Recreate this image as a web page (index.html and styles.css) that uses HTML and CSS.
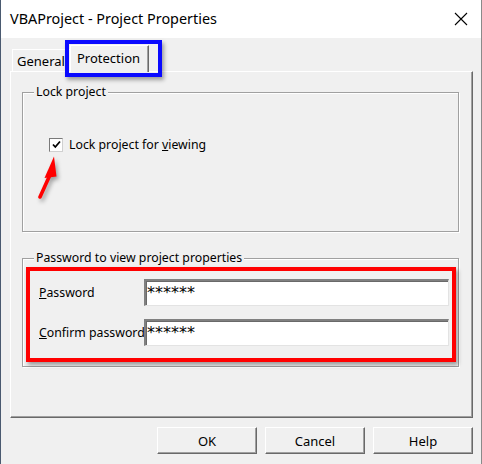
FILE: index.html
```html
<!DOCTYPE html>
<html>
<head>
<meta charset="utf-8">
<link rel="stylesheet" href="styles.css">
</head>
<body>
<div class="window">
  <div class="titlebar">
    <span class="title">VBAProject - Project Properties</span>
    <svg class="close" width="14" height="14" viewBox="0 0 14 14"><path d="M1 1 L13 13 M13 1 L1 13" stroke="#000" stroke-width="1.1" fill="none"/></svg>
  </div>
  <div class="content">
    <div class="tabs">
      <div class="tab tab-general">General</div>
      <div class="tab tab-active">Protection</div>
    </div>
    <div class="page">
      <fieldset class="group group-lock">
        <legend>Lock project</legend>
        <div class="check-row">
          <span class="checkbox"><svg width="11" height="11" viewBox="0 0 11 11"><path d="M2 5.5 L4.3 8 L9 2.5" stroke="#000" stroke-width="1.8" fill="none"/></svg></span>
          <span class="check-label">Lock project for <u>v</u>iewing</span>
        </div>
      </fieldset>
      <fieldset class="group group-pass">
        <legend>Password to view project properties</legend>
        <div class="field-row first">
          <span class="field-label"><u>P</u>assword</span>
          <span class="input">******</span>
        </div>
        <div class="field-row">
          <span class="field-label"><u>C</u>onfirm password</span>
          <span class="input">******</span>
        </div>
      </fieldset>
    </div>
    <div class="buttons">
      <div class="btn">OK</div>
      <div class="btn">Cancel</div>
      <div class="btn">Help</div>
    </div>
  </div>
  <div class="mark mark-blue"></div>
  <div class="mark mark-red"></div>
  <svg class="arrow" width="32" height="56" viewBox="0 0 32 56">
    <path d="M19.5 25 L10 46" stroke="#ff0000" stroke-width="3.6" stroke-linecap="round" fill="none"/>
    <path d="M24 5.5 L26.5 25.5 L14.5 27 Z" fill="#ff0000"/>
  </svg>
</div>
</body>
</html>
```

FILE: styles.css
```css
* { box-sizing: border-box; }
html, body { margin: 0; padding: 0; }
body {
  width: 482px;
  height: 464px;
  overflow: hidden;
  background: #f0f0f0;
  font-family: "Noto Sans", "Liberation Sans", sans-serif;
  font-size: 12.3px;
  color: #000;
}
.window {
  position: relative;
  width: 482px;
  height: 464px;
  background: #f0f0f0;
  border-left: 1px solid #4a5a70;
  border-right: 1px solid #8a8a8a;
  display: flex;
  flex-direction: column;
}
.titlebar {
  height: 38px;
  background: #fff;
  display: flex;
  align-items: center;
  justify-content: space-between;
  padding: 0 13px 0 9px;
  flex-shrink: 0;
}
.title {
  font-size: 14.4px;
  color: #000;
  position: relative;
  top: -1px;
}
.close { display: block; }
.content {
  padding: 0 8px 0 9px;
  display: flex;
  flex-direction: column;
}
.tabs {
  height: 33px;
  display: flex;
  align-items: flex-end;
  padding-left: 2px;
}
.tab {
  border-top: 1px solid #fff;
  border-left: 1px solid #fff;
  border-right: 1px solid #696969;
  box-shadow: inset -1px 0 0 #a0a0a0;
  background: #f0f0f0;
  white-space: nowrap;
  font-size: 13px;
}
.tab-general {
  height: 22px;
  width: 60px;
  padding: 2px 0 0 4px;
  overflow: hidden;
}
.tab-active {
  height: 27px;
  width: 79px;
  margin-left: -2px;
  margin-bottom: -1px;
  padding: 3px 0 0 6px;
  position: relative;
  z-index: 2;
}
.page {
  width: 463px;
  height: 347px;
  border-top: 1px solid #fff;
  border-left: 1px solid #fff;
  border-right: 1px solid #696969;
  border-bottom: 1px solid #696969;
  box-shadow: inset -1px -1px 0 #a0a0a0;
  padding: 12px 12px 0 11px;
  display: flex;
  flex-direction: column;
}
.group {
  margin: 0;
  padding: 0;
  border: 1px solid #a0a0a0;
  box-shadow: 1px 1px 0 #fff, inset 1px 1px 0 #fff;
  width: 437px;
  min-width: 0;
}
.group legend {
  margin-left: 11px;
  padding: 0 2px;
  line-height: 16px;
  background: #f0f0f0;
}
.group-lock { height: 148px; }
.group-pass { height: 117px; margin-top: 18px; }
.check-row {
  display: flex;
  align-items: center;
  margin-top: 36px;
  padding-left: 26px;
}
.checkbox {
  width: 14px;
  height: 14px;
  border: 1px solid #7a7a7a;
  border-right-color: #d0d0d0;
  border-bottom-color: #d0d0d0;
  background: #fff;
  display: flex;
  align-items: center;
  justify-content: center;
}
.checkbox svg { display: block; }
.check-label { margin-left: 6px; }
.field-row {
  display: flex;
  align-items: center;
  padding-left: 16px;
  margin-top: 13px;
}
.field-label {
  width: 105px;
  white-space: nowrap;
}
.input {
  width: 305px;
  height: 27px;
  background: #fff;
  border-top: 2px solid #808080;
  border-left: 2px solid #808080;
  border-right: 1px solid #e3e3e3;
  border-bottom: 1px solid #e3e3e3;
  box-shadow: inset 1px 1px 0 #696969;
  font-family: "DejaVu Sans", sans-serif;
  font-size: 16px;
  letter-spacing: 0;
  line-height: 18px;
  padding: 3px 0 0 1px;
}
.buttons {
  display: flex;
  justify-content: flex-end;
  gap: 8px;
  margin-top: 9px;
}
.btn {
  width: 100px;
  height: 27px;
  border-top: 1px solid #fff;
  border-left: 1px solid #fff;
  border-right: 1px solid #696969;
  border-bottom: 1px solid #696969;
  box-shadow: inset -1px -1px 0 #a0a0a0;
  background: #f0f0f0;
  display: flex;
  align-items: center;
  justify-content: center;
  font-size: 13px;
}
.mark {
  position: absolute;
  box-shadow: 2px 3px 4px rgba(0,0,0,0.35);
}
.mark-blue {
  left: 64px;
  top: 40px;
  width: 97px;
  height: 37px;
  border: 4px solid #0a0aff;
}
.mark-red {
  left: 25px;
  top: 267px;
  width: 430px;
  height: 95px;
  border: 4px solid #ff0000;
}
.arrow {
  position: absolute;
  left: 29px;
  top: 151px;
  filter: drop-shadow(2px 3px 2px rgba(0,0,0,0.35));
}
```
